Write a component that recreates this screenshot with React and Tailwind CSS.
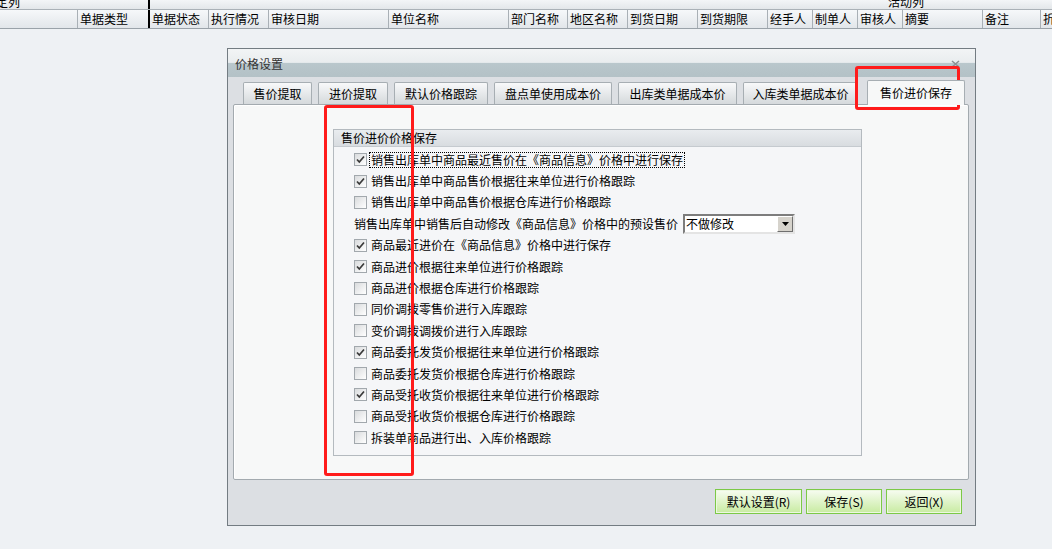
import React from 'react';

const cols = [
  { label: '', w: 'w-[78px]' },
  { label: '单据类型', w: 'w-[72px]', thick: true },
  { label: '单据状态', w: 'w-[59px]' },
  { label: '执行情况', w: 'w-[60px]' },
  { label: '审核日期', w: 'w-[120px]' },
  { label: '单位名称', w: 'w-[120px]' },
  { label: '部门名称', w: 'w-[59px]' },
  { label: '地区名称', w: 'w-[60px]' },
  { label: '到货日期', w: 'w-[70px]' },
  { label: '到货期限', w: 'w-[70px]' },
  { label: '经手人', w: 'w-[45px]' },
  { label: '制单人', w: 'w-[45px]' },
  { label: '审核人', w: 'w-[45px]' },
  { label: '摘要', w: 'w-[80px]' },
  { label: '备注', w: 'w-[58px]' },
  { label: '折', w: 'w-[40px]' },
];

const tabs = [
  { label: '售价提取', w: 'w-[69px]' },
  { label: '进价提取', w: 'w-[70px]' },
  { label: '默认价格跟踪', w: 'w-[94px]' },
  { label: '盘点单使用成本价', w: 'w-[118px]' },
  { label: '出库类单据成本价', w: 'w-[119px]' },
  { label: '入库类单据成本价', w: 'w-[115px]' },
];

// null = the dropdown row
const options = [
  { on: true, text: '销售出库单中商品最近售价在《商品信息》价格中进行保存', focus: true },
  { on: true, text: '销售出库单中商品售价根据往来单位进行价格跟踪' },
  { on: false, text: '销售出库单中商品售价根据仓库进行价格跟踪' },
  null,
  { on: true, text: '商品最近进价在《商品信息》价格中进行保存' },
  { on: true, text: '商品进价根据往来单位进行价格跟踪' },
  { on: false, text: '商品进价根据仓库进行价格跟踪' },
  { on: false, text: '同价调拨零售价进行入库跟踪' },
  { on: false, text: '变价调拨调拨价进行入库跟踪' },
  { on: true, text: '商品委托发货价根据往来单位进行价格跟踪' },
  { on: false, text: '商品委托发货价根据仓库进行价格跟踪' },
  { on: true, text: '商品受托收货价根据往来单位进行价格跟踪' },
  { on: false, text: '商品受托收货价根据仓库进行价格跟踪' },
  { on: false, text: '拆装单商品进行出、入库价格跟踪' },
];

const Check = ({ on }) => (
  <span className="w-[13px] h-[13px] shrink-0 border border-[#a2a8ad] bg-gradient-to-br from-[#d9dbdd] to-white flex items-center justify-center">
    {on && (
      <svg width="11" height="11" viewBox="0 0 11 11">
        <path d="M2 5.5 L4.3 8 L9 2.5" stroke="#3a3a3a" strokeWidth="1.7" fill="none" />
      </svg>
    )}
  </span>
);

const Btn = ({ children, w }) => (
  <button className={`${w} h-[25px] border border-[#7cc947] bg-gradient-to-b from-[#f7fcf1] to-[#c8eba0] shadow-[inset_0_0_0_1px_#ecf8df] text-[12px] leading-[14px] text-black flex items-center justify-center`}>
    {children}
  </button>
);

export default function App() {
  return (
    <div className="relative w-[1052px] h-[549px] overflow-hidden bg-[#eef1f4] text-black font-['Noto_Sans_CJK_SC','Liberation_Sans',sans-serif] text-[12px]">
      {/* grid header */}
      <div className="h-[10px] flex border-b border-[#aab1b7] bg-gradient-to-b from-[#f3f5f7] to-[#e3e7ea] overflow-hidden">
        <div className="w-[150px] shrink-0 border-r-2 border-black overflow-hidden">
          <div className="leading-[14px] -mt-[5px] -ml-[4px]">定列</div>
        </div>
        <div className="flex-1 leading-[14px] -mt-[5px] pl-[738px]">活动列</div>
      </div>
      <div className="h-[19px] flex border-b border-[#9aa2a9] bg-gradient-to-b from-[#f6f8fa] to-[#e2e6ea] overflow-hidden">
        {cols.map((c, i) => (
          <div
            key={i}
            className={`${c.w} shrink-0 pl-[2px] flex items-center leading-[14px] ${c.thick ? 'border-r-2 border-black' : 'border-r border-[#a9b0b6]'}`}
          >
            {c.label}
          </div>
        ))}
      </div>

      {/* dialog */}
      <div className="pl-[227px] pt-[19px]">
        <div className="w-[749px] h-[478px] border border-[#737c82] flex flex-col">
          <div className="relative h-[28px] shrink-0 bg-[linear-gradient(#f2f4f5_0%,#e9edef_48%,#b9c7cc_50%,#b3c1c6_100%)] pl-[7px] pt-[8px] leading-[14px] text-[#333]">
            价格设置
            <svg className="absolute right-[15px] top-[11px]" width="9" height="8" viewBox="0 0 9 8">
              <path d="M1 1 L8 7 M8 1 L1 7" stroke="#8a8f93" strokeWidth="1.5" />
            </svg>
          </div>

          <div className="flex-1 bg-[#dcdfe3] flex flex-col">
            {/* tabs */}
            <div className="h-[27px] flex items-end pl-[15px] gap-[6px] shrink-0">
              {tabs.map((t) => (
                <div
                  key={t.label}
                  className={`${t.w} h-[22px] shrink-0 border border-b-0 border-[#a7aeb3] rounded-t-[2px] bg-gradient-to-b from-[#f8f9fa] to-[#d5d9dc] flex items-center justify-center leading-[14px]`}
                >
                  {t.label}
                </div>
              ))}
              <div className="w-[98px] h-[25px] ml-[3px] -mb-px relative z-10 shrink-0 border border-b-0 border-[#a7aeb3] rounded-t-[2px] bg-[#f7f8f8] flex items-center justify-center leading-[14px]">
                售价进价保存
              </div>
            </div>

            {/* panel */}
            <div className="ml-[5px] w-[736px] h-[376px] border border-[#a3aaaf] rounded-[2px] bg-[#f7f8f8] shadow-[inset_1px_1px_0_#ffffff] pt-[24px] pl-[99px] shrink-0">
              <div className="w-[529px] h-[327px] border border-[#b4babf] bg-[#f5f6f8]">
                <div className="h-[17px] bg-gradient-to-b from-[#e9ecef] to-[#d8dce0] border-b border-[#c5cacf] pl-[7px] flex items-center leading-[14px]">
                  售价进价价格保存
                </div>
                <div className="pt-[2px] pl-[20px]">
                  {options.map((o, i) =>
                    o ? (
                      <div key={i} className="h-[21.4px] flex items-center gap-[3px]">
                        <Check on={o.on} />
                        <span className={`leading-[14px] px-[1px] ${o.focus ? 'outline outline-1 outline-dotted outline-black' : ''}`}>
                          {o.text}
                        </span>
                      </div>
                    ) : (
                      <div key={i} className="h-[21.4px] flex items-center">
                        <span className="leading-[14px]">销售出库单中销售后自动修改《商品信息》价格中的预设售价</span>
                        <div className="ml-[5px] w-[112px] h-[20px] border-2 border-t-[#7d7d7d] border-l-[#7d7d7d] border-b-[#e4e4e4] border-r-[#e4e4e4] bg-white flex items-center">
                          <span className="flex-1 pl-[1px] leading-[14px]">不做修改</span>
                          <span className="w-[16px] h-[16px] bg-[#d6d3cc] border border-t-white border-l-white border-b-[#6f6f6f] border-r-[#6f6f6f] flex items-center justify-center">
                            <svg width="7" height="4" viewBox="0 0 7 4">
                              <path d="M0 0 H7 L3.5 4 Z" fill="#000" />
                            </svg>
                          </span>
                        </div>
                      </div>
                    )
                  )}
                </div>
              </div>
            </div>

            {/* buttons */}
            <div className="flex justify-end gap-[4px] pr-[13px] mt-[9px]">
              <Btn w="w-[87px]">默认设置(R)</Btn>
              <Btn w="w-[76px]">保存(S)</Btn>
              <Btn w="w-[76px]">返回(X)</Btn>
            </div>
          </div>
        </div>
      </div>

      {/* red annotation boxes */}
      <div className="absolute left-[324px] top-[105px] w-[90px] h-[371px] border-[3px] border-[#ff1b1b] rounded-[3px]" />
      <div className="absolute left-[855px] top-[66px] w-[105px] h-[44px] border-[3px] border-[#ff1b1b] rounded-[3px]" />
    </div>
  );
}
